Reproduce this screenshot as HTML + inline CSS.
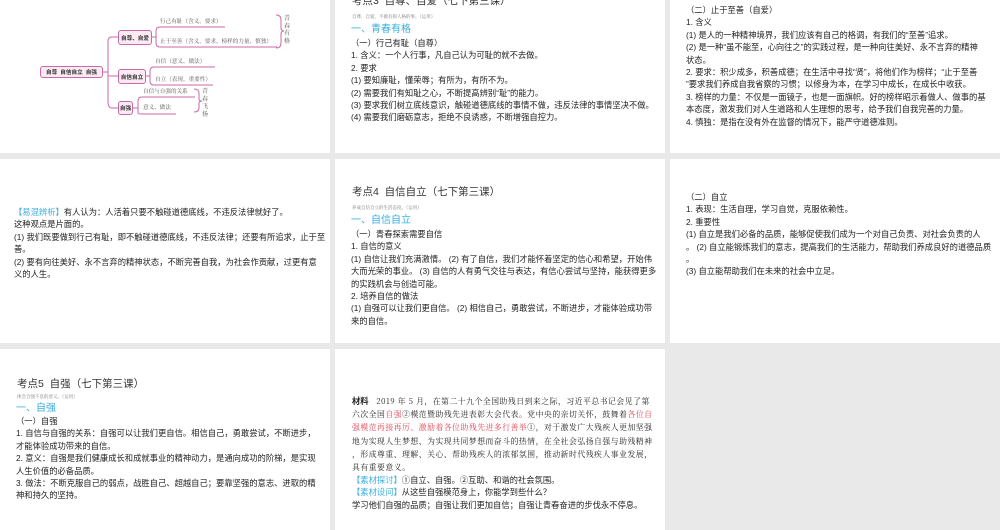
<!DOCTYPE html>
<html><head><meta charset="utf-8"><style>
*{margin:0;padding:0;box-sizing:border-box}
body{width:1000px;height:530px;background:#e9e9e9;position:relative;overflow:hidden;font-family:"Liberation Sans","Noto Sans CJK SC",sans-serif;color:#222}
.p{position:absolute;background:#fff;overflow:hidden}
.t{position:absolute;font-size:8.3px;line-height:12.4px;white-space:nowrap}
.tt{position:absolute;font-size:10.5px;line-height:13px;white-space:nowrap;color:#333}
.sub{position:absolute;font-size:4.5px;line-height:6px;color:#777;white-space:nowrap;font-family:"Noto Serif CJK SC",serif}
.bl{position:absolute;font-size:10px;line-height:12px;color:#3aaee0;white-space:nowrap}
.c{color:#3aaee0}
.r{color:#e04050}
.mm{position:absolute;font-size:5.6px;line-height:7px;white-space:nowrap;color:#555;font-family:"Noto Serif CJK SC",serif}
.bx{position:absolute;border:1px solid #c86aa6;background:#fbeaf3;border-radius:3px;font-size:5.6px;font-weight:bold;display:flex;align-items:center;justify-content:center;color:#333;white-space:nowrap}
.v{position:absolute;font-size:6px;line-height:7.5px;width:7px;color:#555;font-family:"Noto Serif CJK SC",serif;white-space:normal}
.s{font-family:"Noto Serif CJK SC",serif;font-size:7.8px;letter-spacing:0.55px}
</style></head><body>

<div class="p" style="left:0;top:0;width:330px;height:153px">
<svg width="330" height="153" style="position:absolute;left:0;top:0" fill="none" stroke="#c86aa6" stroke-width="1">
<path d="M103 72 H108 M108 72 V41 Q108 37 112 37 H118 M108 72 V101 Q108 108 112 108 H118 M108 76 H118"/>
<path d="M152 37 H156 M156 37 V31 Q156 27 160 27 H225 M156 37 V43 Q156 47 160 47 H277"/>
<path d="M146 76 H150 V71 Q150 67 154 67 H215 M150 76 V81 Q150 85 154 85 H213"/>
<path d="M133 108 H138 V101 Q138 97 142 97 H195 M138 108 V113 Q138 114 142 114 H176"/>
<path d="M276 15 Q281 15 281 20 V28 Q281 31 284 31 Q281 31 281 34 V43 Q281 48 276 48"/>
<path d="M194 89 Q199 89 199 93 V99 Q199 101 202 101 Q199 101 199 103 V108 Q199 112 194 112"/>
</svg>
<div class="bx" style="left:40px;top:66px;width:63px;height:12px">自尊&nbsp;&nbsp;自信自立&nbsp;&nbsp;自强</div>
<div class="bx" style="left:118px;top:30px;width:34px;height:15px">自尊、自爱</div>
<div class="bx" style="left:118px;top:69px;width:28px;height:15px">自信自立</div>
<div class="bx" style="left:118px;top:101px;width:15px;height:14px">自强</div>
<div class="mm" style="left:160px;top:18px">行己有耻（含义、要求）</div>
<div class="mm" style="left:160px;top:38px">止于至善（含义、要求、榜样的力量、慎独）</div>
<div class="mm" style="left:155px;top:58px">自信（意义、做法）</div>
<div class="mm" style="left:155px;top:76px">自立（表现、重要性）</div>
<div class="mm" style="left:143px;top:88px">自信与自强的关系</div>
<div class="mm" style="left:143px;top:104px">意义、做法</div>
<div class="v" style="left:284px;top:14px">青春有格</div>
<div class="v" style="left:202px;top:87px">青春飞扬</div>
</div>

<div class="p" style="left:335px;top:0;width:330px;height:153px">
<div class="tt" style="left:17px;top:-5px">考点3&nbsp;&nbsp;自尊、自爱（七下第三课）</div>
<div class="sub" style="left:17px;top:14px">自尊、自爱，不做有损人格的事。（运用）</div>
<div class="bl" style="left:16px;top:24px">一、青春有格</div>
<div class="t" style="left:16px;top:37px">（一）行己有耻（自尊）<br>1. 含义：一个人行事，凡自己认为可耻的就不去做。<br>2. 要求<br>(1) 要知廉耻，懂荣辱；有所为，有所不为。<br>(2) 需要我们有知耻之心，不断提高辨别“耻”的能力。<br>(3) 要求我们树立底线意识，触碰道德底线的事情不做，违反法律的事情坚决不做。<br>(4) 需要我们磨砺意志，拒绝不良诱惑，不断增强自控力。</div>
</div>

<div class="p" style="left:670px;top:0;width:330px;height:153px">
<div class="t" style="left:16px;top:4px">（二）止于至善（自爱）<br>1. 含义<br>(1) 是人的一种精神境界，我们应该有自己的格调，有我们的“至善”追求。<br>(2) 是一种“虽不能至，心向往之”的实践过程，是一种向往美好、永不言弃的精神<br>状态。<br>2. 要求：积少成多，积善成德；在生活中寻找“贤”，将他们作为榜样；“止于至善<br>”要求我们养成自我省察的习惯；以修身为本，在学习中成长，在成长中收获。<br>3. 榜样的力量：不仅是一面镜子，也是一面旗帜。好的榜样昭示着做人、做事的基<br>本态度，激发我们对人生道路和人生理想的思考，给予我们自我完善的力量。<br>4. 慎独：是指在没有外在监督的情况下，能严守道德准则。</div>
</div>

<div class="p" style="left:0;top:159px;width:330px;height:184px">
<div class="t" style="left:14px;top:47px"><span class="c">【易混辨析】</span>有人认为：人活着只要不触碰道德底线，不违反法律就好了。<br>这种观点是片面的。<br>(1) 我们既要做到行己有耻，即不触碰道德底线，不违反法律；还要有所追求，止于至<br>善。<br>(2) 要有向往美好、永不言弃的精神状态，不断完善自我，为社会作贡献，过更有意<br>义的人生。</div>
</div>

<div class="p" style="left:335px;top:159px;width:330px;height:184px">
<div class="tt" style="left:17px;top:27px">考点4&nbsp;&nbsp;自信自立（七下第三课）</div>
<div class="sub" style="left:17px;top:46px">养成自信自立的生活态度。（运用）</div>
<div class="bl" style="left:16px;top:56px">一、自信自立</div>
<div class="t" style="left:16px;top:69px">（一）青春探索需要自信<br>1. 自信的意义<br>(1) 自信让我们充满激情。 (2) 有了自信，我们才能怀着坚定的信心和希望，开始伟<br>大而光荣的事业。 (3) 自信的人有勇气交往与表达，有信心尝试与坚持，能获得更多<br>的实践机会与创造可能。<br>2. 培养自信的做法<br>(1) 自强可以让我们更自信。 (2) 相信自己，勇敢尝试，不断进步，才能体验成功带<br>来的自信。</div>
</div>

<div class="p" style="left:670px;top:159px;width:330px;height:184px">
<div class="t" style="left:16px;top:32px">（二）自立<br>1. 表现：生活自理，学习自觉，克服依赖性。<br>2. 重要性<br>(1) 自立是我们必备的品质，能够促使我们成为一个对自己负责、对社会负责的人<br>。 (2) 自立能锻炼我们的意志，提高我们的生活能力，帮助我们养成良好的道德品质<br>。<br>(3) 自立能帮助我们在未来的社会中立足。</div>
</div>

<div class="p" style="left:0;top:349px;width:330px;height:181px">
<div class="tt" style="left:17px;top:29px">考点5&nbsp;&nbsp;自强（七下第三课）</div>
<div class="sub" style="left:17px;top:45px">体会自强不息的意义。（运用）</div>
<div class="bl" style="left:16px;top:54px">一、自强</div>
<div class="t" style="left:16px;top:66px">（一）自强<br>1. 自信与自强的关系：自强可以让我们更自信。相信自己，勇敢尝试，不断进步，<br>才能体验成功带来的自信。<br>2. 意义：自强是我们健康成长和成就事业的精神动力，是通向成功的阶梯，是实现<br>人生价值的必备品质。<br>3. 做法：不断克服自己的弱点，战胜自己、超越自己；要靠坚强的意志、进取的精<br>神和持久的坚持。</div>
</div>

<div class="p" style="left:335px;top:349px;width:330px;height:181px">
<div class="t" style="left:17px;top:46px;line-height:12.2px"><span class="s"><b style="font-family:'Liberation Sans','Noto Sans CJK SC',sans-serif;font-size:8.3px;letter-spacing:0">材料</b>&nbsp;&nbsp;&nbsp;2019 年 5 月，在第二十九个全国助残日到来之际，习近平总书记会见了第<br>六次全国<span class="r">自强</span>②模范暨助残先进表彰大会代表。党中央的亲切关怀，鼓舞着<span class="r">各位自<br>强模范再接再厉、激励着各位助残先进多行善举</span>①，对于激发广大残疾人更加坚强<br>地为实现人生梦想、为实现共同梦想而奋斗的热情，在全社会弘扬自强与助残精神<br>，形成尊重、理解、关心、帮助残疾人的浓郁氛围，推动新时代残疾人事业发展，<br>具有重要意义。</span><br><span class="c">【素材探讨】</span>①自立、自强。②互助、和谐的社会氛围。<br><span class="c">【素材设问】</span>从这些自强模范身上，你能学到些什么？<br>学习他们自强的品质；自强让我们更加自信；自强让青春奋进的步伐永不停息。</div>
</div>

</body></html>
